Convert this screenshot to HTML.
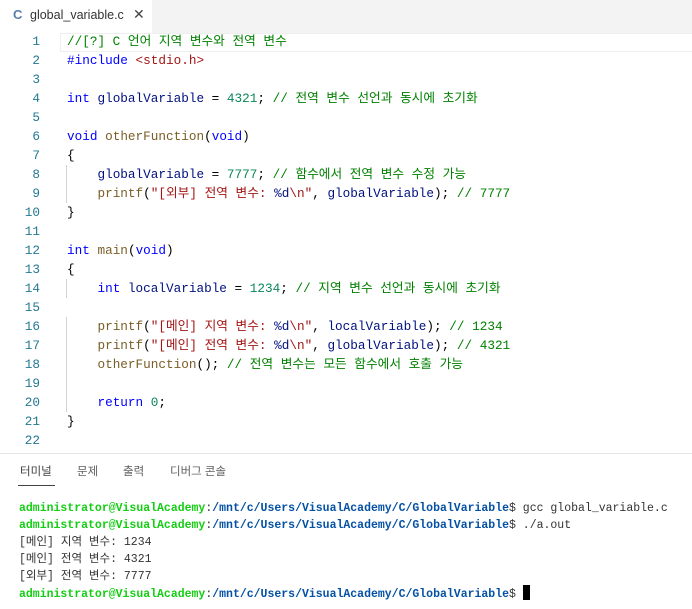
<!DOCTYPE html>
<html><head><meta charset="utf-8"><style>
body{margin:0;width:692px;height:609px;background:#fff;overflow:hidden;position:relative;font-family:"Liberation Sans","Noto Sans CJK KR",sans-serif}
.tabbar{position:absolute;left:0;top:0;width:692px;height:33px;background:#f3f3f3}
.tab{position:absolute;left:0;top:0;width:152px;height:33px;background:#fff;font-size:13px;color:#333}
.tab .c{position:absolute;left:13px;top:7px;font-weight:bold;font-size:13px;color:#5a7fae}
.tab .n{position:absolute;left:30px;top:8px;font-size:12.5px}
.tab .x{position:absolute;left:133px;top:6px;font-size:14px;color:#444}
.code{position:absolute;left:0;top:32px;font-family:"Liberation Mono","Noto Sans CJK KR",monospace;font-size:12.7px}
.ln{position:absolute;left:0;width:40px;text-align:right;color:#237893;height:19px;line-height:19px}
.l{position:absolute;left:67px;white-space:pre;height:19px;line-height:19px;color:#000}
.cur{position:absolute;left:60px;top:33px;width:632px;height:17px;border:1px solid #eee}
.g{position:absolute;left:66px;width:1px;background:#d3d3d3}
.cm{color:#008000}.kw{color:#0000ff}.nm{color:#098658}.st{color:#a31515}.fn{color:#795e26}.v{color:#001080}
.sep{position:absolute;left:0;top:453px;width:692px;height:1px;background:#e5e5e5}
.pt{position:absolute;top:463px;font-size:11.5px;color:#616161}
.ul{position:absolute;left:18px;top:485px;width:37px;height:1px;background:#424242}
.term{position:absolute;left:19px;top:500px;font-family:"Liberation Mono","Noto Sans CJK KR",monospace;font-size:11.5px;color:#333}
.term div{height:17px;line-height:17px;white-space:pre}
.gr{color:#14ce14;font-weight:bold}.bl{color:#0451a5;font-weight:bold}
.cursor{display:inline-block;width:7px;height:15px;background:#000;vertical-align:-3px}
</style></head><body>
<div class="tabbar"><div class="tab"><span class="c">C</span><span class="n">global_variable.c</span><span class="x">✕</span></div></div>
<div class="cur"></div>
<div class="g" style="top:165px;height:38px"></div>
<div class="g" style="top:279px;height:19px"></div>
<div class="g" style="top:317px;height:95px"></div>
<div class="code">
<div class="ln" style="top:0">1</div><div class="l" style="top:0"><span class="cm">//[?] C 언어 지역 변수와 전역 변수</span></div>
<div class="ln" style="top:19px">2</div><div class="l" style="top:19px"><span class="kw">#include</span> <span class="st">&lt;stdio.h&gt;</span></div>
<div class="ln" style="top:38px">3</div>
<div class="ln" style="top:57px">4</div><div class="l" style="top:57px"><span class="kw">int</span> <span class="v">globalVariable</span> = <span class="nm">4321</span>; <span class="cm">// 전역 변수 선언과 동시에 초기화</span></div>
<div class="ln" style="top:76px">5</div>
<div class="ln" style="top:95px">6</div><div class="l" style="top:95px"><span class="kw">void</span> <span class="fn">otherFunction</span>(<span class="kw">void</span>)</div>
<div class="ln" style="top:114px">7</div><div class="l" style="top:114px">{</div>
<div class="ln" style="top:133px">8</div><div class="l" style="top:133px">    <span class="v">globalVariable</span> = <span class="nm">7777</span>; <span class="cm">// 함수에서 전역 변수 수정 가능</span></div>
<div class="ln" style="top:152px">9</div><div class="l" style="top:152px">    <span class="fn">printf</span>(<span class="st">"[외부] 전역 변수: </span><span class="v">%d</span><span class="st">\n"</span>, <span class="v">globalVariable</span>); <span class="cm">// 7777</span></div>
<div class="ln" style="top:171px">10</div><div class="l" style="top:171px">}</div>
<div class="ln" style="top:190px">11</div>
<div class="ln" style="top:209px">12</div><div class="l" style="top:209px"><span class="kw">int</span> <span class="fn">main</span>(<span class="kw">void</span>)</div>
<div class="ln" style="top:228px">13</div><div class="l" style="top:228px">{</div>
<div class="ln" style="top:247px">14</div><div class="l" style="top:247px">    <span class="kw">int</span> <span class="v">localVariable</span> = <span class="nm">1234</span>; <span class="cm">// 지역 변수 선언과 동시에 초기화</span></div>
<div class="ln" style="top:266px">15</div>
<div class="ln" style="top:285px">16</div><div class="l" style="top:285px">    <span class="fn">printf</span>(<span class="st">"[메인] 지역 변수: </span><span class="v">%d</span><span class="st">\n"</span>, <span class="v">localVariable</span>); <span class="cm">// 1234</span></div>
<div class="ln" style="top:304px">17</div><div class="l" style="top:304px">    <span class="fn">printf</span>(<span class="st">"[메인] 전역 변수: </span><span class="v">%d</span><span class="st">\n"</span>, <span class="v">globalVariable</span>); <span class="cm">// 4321</span></div>
<div class="ln" style="top:323px">18</div><div class="l" style="top:323px">    <span class="fn">otherFunction</span>(); <span class="cm">// 전역 변수는 모든 함수에서 호출 가능</span></div>
<div class="ln" style="top:342px">19</div>
<div class="ln" style="top:361px">20</div><div class="l" style="top:361px">    <span class="kw">return</span> <span class="nm">0</span>;</div>
<div class="ln" style="top:380px">21</div><div class="l" style="top:380px">}</div>
<div class="ln" style="top:399px">22</div>
</div>
<div class="sep"></div>
<div class="pt" style="left:20px;color:#424242">터미널</div>
<div class="pt" style="left:77px">문제</div>
<div class="pt" style="left:123px">출력</div>
<div class="pt" style="left:170px">디버그 콘솔</div>
<div class="ul"></div>
<div class="term"><div><span class="gr">administrator@VisualAcademy</span>:<span class="bl">/mnt/c/Users/VisualAcademy/C/GlobalVariable</span>$ gcc global_variable.c</div><div><span class="gr">administrator@VisualAcademy</span>:<span class="bl">/mnt/c/Users/VisualAcademy/C/GlobalVariable</span>$ ./a.out</div><div>[메인] 지역 변수: 1234</div><div>[메인] 전역 변수: 4321</div><div>[외부] 전역 변수: 7777</div><div><span class="gr">administrator@VisualAcademy</span>:<span class="bl">/mnt/c/Users/VisualAcademy/C/GlobalVariable</span>$ <span class="cursor"></span></div></div>
</body></html>
